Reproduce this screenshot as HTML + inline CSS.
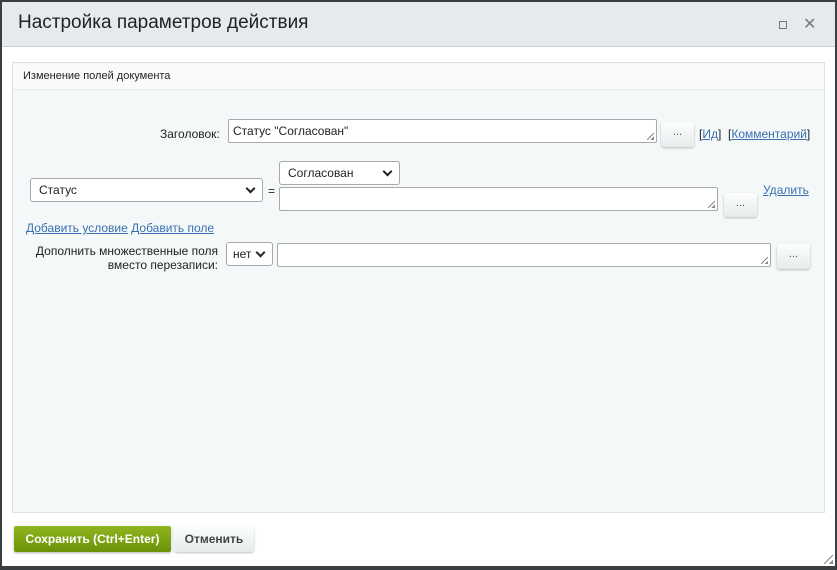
<!DOCTYPE html>
<html><head><meta charset="utf-8"><style>
*{box-sizing:border-box;margin:0;padding:0}
body{width:837px;height:570px;background:#3b3e41;font-family:"Liberation Sans",Arial,sans-serif;font-size:12px;color:#222;position:relative;overflow:hidden}
.dlg{position:absolute;left:2px;top:2px;width:833px;height:564px;background:#fff}
.hdr{position:absolute;left:0;top:0;width:833px;height:45px;background:#e6eaed;border-bottom:1px solid #c9cdd0}
.hdr h1{position:absolute;left:16px;top:10px;font-size:19px;font-weight:normal;color:#222}
.panel{position:absolute;left:10px;top:60px;width:813px;height:451px;background:#f5f8f9;border:1px solid #dde3e5}
.sec{height:27px;background:#f9fbfb;border-bottom:1px solid #e3e8ea;padding:7px 10px;font-size:11px}
.a{position:absolute}
.inp{position:absolute;background:#fff;border:1px solid #a5a9ad;border-radius:2px}
.sel{position:absolute;background:#fff;border:1px solid #a5a9ad;border-radius:3px;padding:0 8px;line-height:22px;font-size:12px}
.sel:after{content:"";position:absolute;right:8px;top:6px;width:5px;height:5px;border-right:2px solid #222;border-bottom:2px solid #222;transform:rotate(45deg)}
.btn{position:absolute;background:linear-gradient(#fdfefe,#e6ebec);border-radius:3px;box-shadow:0 1px 2px rgba(0,0,0,.25);text-align:center;font-size:11px;color:#555;line-height:20px}
a{color:#3a70ae;text-decoration:underline}
.rz{position:absolute;right:2px;bottom:2px;width:7px;height:7px;background:linear-gradient(135deg,transparent 45%,#888 45%,#888 55%,transparent 55%,transparent 75%,#888 75%)}
</style></head><body>
<div class="dlg">
<div class="hdr"><h1>Настройка параметров действия</h1>
<div class="a" style="left:777px;top:19px;width:8px;height:8px;border:1.5px solid #777"></div>
<div class="a" style="left:801px;top:12px;font-size:16px;color:#777">✕</div>
</div>
<div class="panel">
<div class="sec">Изменение полей документа</div>
</div>
<div class="a" style="left:158px;top:125px">Заголовок:</div>
<div class="inp" style="left:226px;top:117px;width:429px;height:24px;padding:4px 4px;font-size:12px">Статус "Согласован"<div class="rz"></div></div>
<div class="btn" style="left:659px;top:120px;width:33px;height:25px">...</div>
<div class="a" style="left:697px;top:125px">[<a>Ид</a>]&nbsp; [<a>Комментарий</a>]</div>

<div class="sel" style="left:28px;top:176px;width:233px;height:24px">Статус</div>
<div class="a" style="left:266px;top:182px">=</div>
<div class="sel" style="left:277px;top:159px;width:121px;height:24px">Согласован</div>
<div class="inp" style="left:277px;top:185px;width:439px;height:24px"><div class="rz"></div></div>
<div class="btn" style="left:722px;top:191px;width:33px;height:24px">...</div>
<div class="a" style="left:761px;top:181px"><a>Удалить</a></div>

<div class="a" style="left:24px;top:219px"><a>Добавить условие</a> <a>Добавить поле</a></div>
<div class="a" style="left:20px;top:242px;width:196px;text-align:right;line-height:14px">Дополнить множественные поля<br>вместо перезаписи:</div>
<div class="sel" style="left:224px;top:240px;width:47px;height:24px;padding:0 6px">нет</div>
<div class="inp" style="left:275px;top:241px;width:494px;height:24px"><div class="rz"></div></div>
<div class="btn" style="left:775px;top:242px;width:33px;height:25px">...</div>

<div class="a" style="left:12px;top:524px;width:157px;height:26px;background:linear-gradient(#8fb61e,#6a9209);border-radius:2px;color:#fff;font-weight:bold;font-size:12px;text-align:center;line-height:26px;box-shadow:0 1px 2px rgba(0,0,0,.3)">Сохранить (Ctrl+Enter)</div>
<div class="btn" style="left:172px;top:524px;width:80px;height:26px;line-height:26px;font-size:12px;font-weight:bold;color:#444">Отменить</div>
<div class="rz" style="right:2px;bottom:2px;width:9px;height:9px"></div>
</div>
</body></html>
